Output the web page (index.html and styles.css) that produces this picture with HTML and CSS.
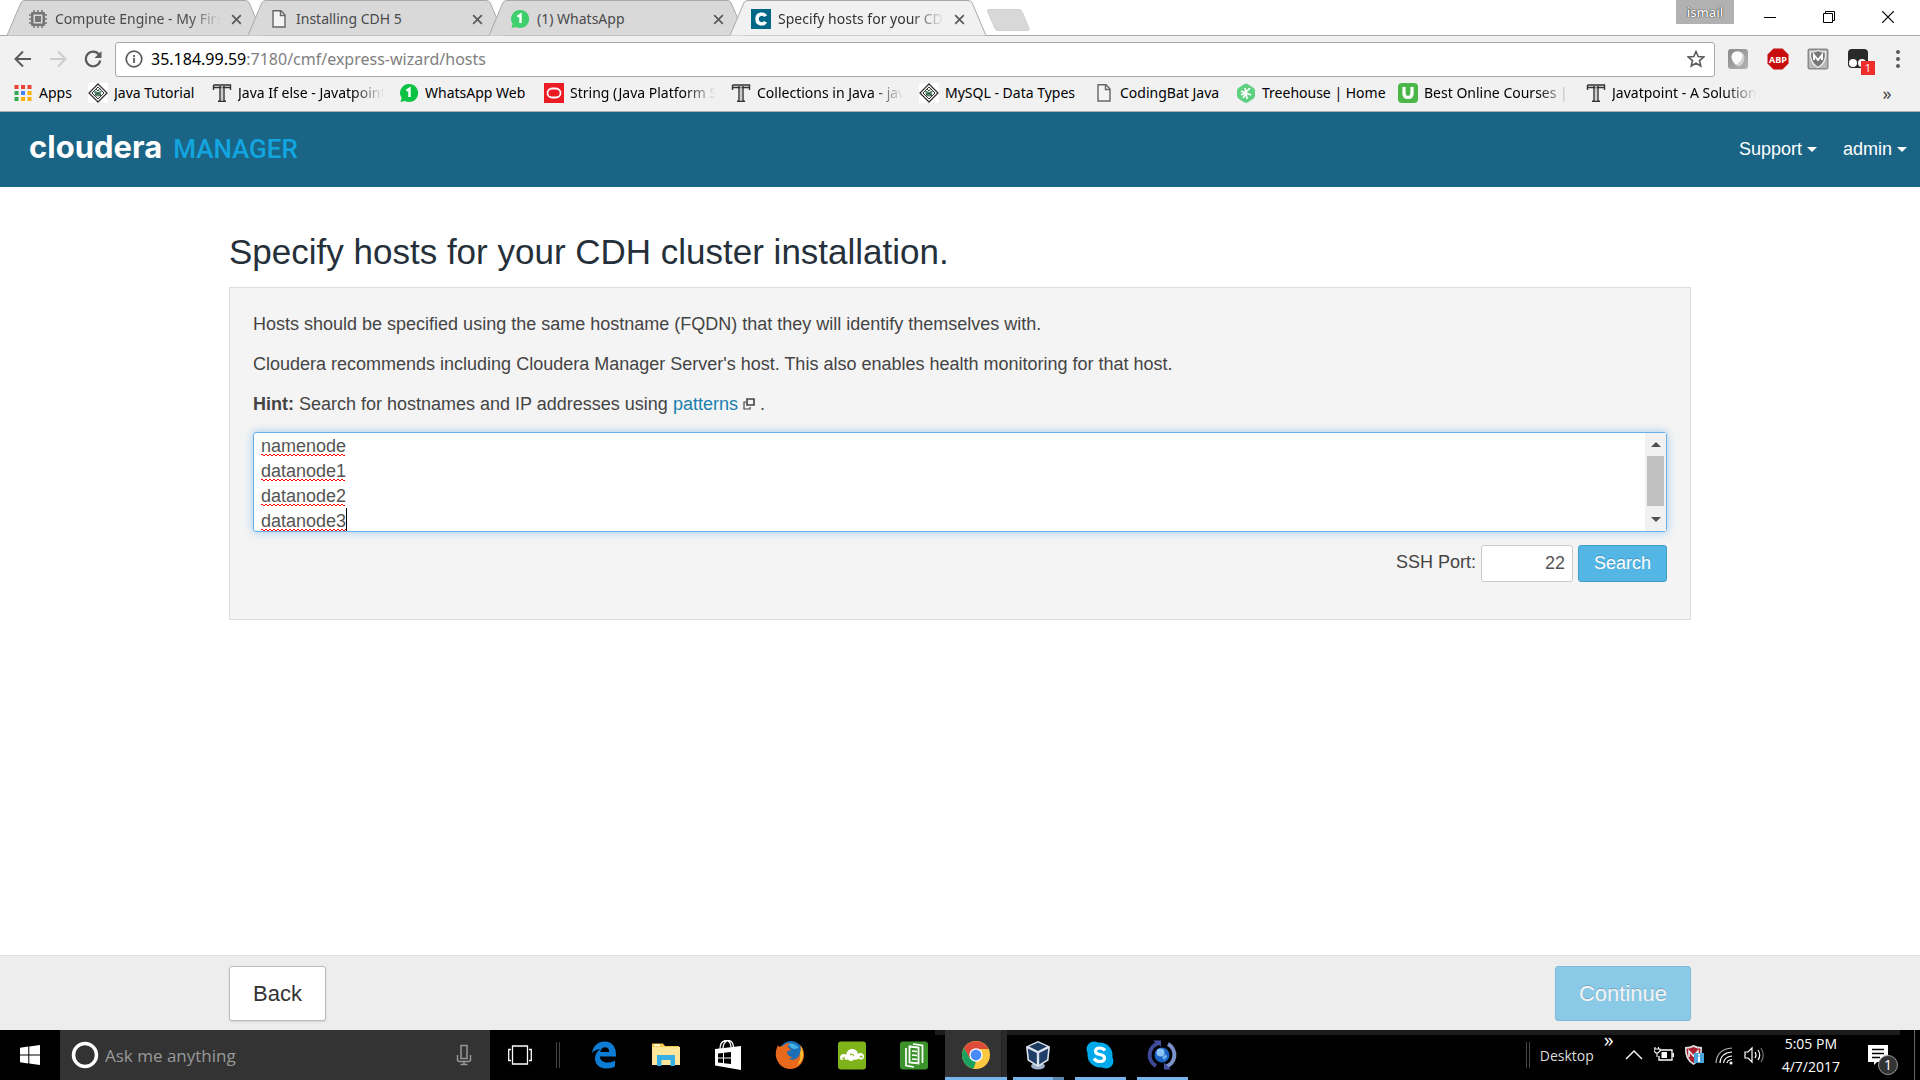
FILE: index.html
```html
<!DOCTYPE html>
<html lang="en">
<head>
<meta charset="utf-8">
<title>Specify hosts for your CDH cluster installation.</title>
<link rel="stylesheet" href="styles.css">
</head>
<body>
<svg class="sprite" aria-hidden="true">
  <symbol id="i-close" viewBox="0 0 12 12"><path d="M2 2l8 8M10 2l-8 8" fill="none" stroke="#5a5a5a" stroke-width="1.600"/></symbol>
  <symbol id="i-page" viewBox="0 0 20 20"><path d="M4 1.800h8l4 4.200v12H4z" fill="#f4f4f4" stroke="#666" stroke-width="1.400"/><path d="M11.500 2v4.500H16" fill="none" stroke="#666" stroke-width="1.400"/></symbol>
  <symbol id="i-whatsapp" viewBox="0 0 20 20"><path d="M10 1a9 9 0 1 1-4 17L1.500 19 2.600 15A9 9 0 0 1 10 1z" fill="currentColor"/><path d="M7.500 7.800l3-2V14" fill="none" stroke="#fff" stroke-width="2.400"/></symbol>
  <symbol id="i-tp" viewBox="0 0 20 20"><rect width="20" height="20" fill="#fff"/><path d="M10 1l9 9-9 9-9-9z" fill="#fff" stroke="#333" stroke-width="1.300"/><path d="M10 4l6 6-6 6-6-6z" fill="none" stroke="#333"/><path d="M6 8c2-1 3 1 4 1s2-2 4-1c-1 1-1 2-1 4-1 2-5 2-6 0-.500-2-.500-3-1-4z" fill="#5c8a70"/><path d="M8 6l2 2 2-3M7 12l3-2 3 3" fill="none" stroke="#2f4a3c"/></symbol>
  <symbol id="i-t" viewBox="0 0 20 20"><path d="M1.500 2h17v5M1.500 7V2M2 4.500h16M8 3v15M12 3v15M6 18.200h8" fill="none" stroke="#333" stroke-width="1.400"/><path d="M9.300 4h1.400v14H9.300z" fill="#bbb"/></symbol>
  <symbol id="i-oracle" viewBox="0 0 20 20"><rect width="20" height="20" fill="#ed1c24"/><rect x="3.500" y="5.500" width="13" height="9" rx="4.500" fill="none" stroke="#fff" stroke-width="1.800"/></symbol>
</svg>

<header class="browser">
  <div class="tabstrip">
    <nav class="tabs" aria-label="Tabs">
      <div class="tab">
        <svg class="tab-shape" viewBox="0 0 256 36"><path d="M0 35.500L14 2.500Q15.500.500 18 .500H238Q240.500.500 242 2.500L256 35.500"/></svg>
        <svg class="ico" viewBox="0 0 20 20"><path d="M6 1v18M10 1v18M14 1v18M1 6h18M1 10h18M1 14h18" stroke="#757575" stroke-width="1.500"/><rect x="3" y="3" width="14" height="14" rx="1" fill="#757575"/><rect x="5.500" y="5.500" width="9" height="9" fill="#d8d8d8"/><rect x="7" y="7" width="6" height="6" fill="#757575"/></svg>
        <span class="tab-title fade">Compute Engine - My First</span>
        <button class="tab-close" aria-label="Close tab"><svg><use href="#i-close"/></svg></button>
      </div>
      <div class="tab">
        <svg class="tab-shape" viewBox="0 0 256 36"><path d="M0 35.500L14 2.500Q15.500.500 18 .500H238Q240.500.500 242 2.500L256 35.500"/></svg>
        <svg class="ico"><use href="#i-page"/></svg>
        <span class="tab-title">Installing CDH 5</span>
        <button class="tab-close" aria-label="Close tab"><svg><use href="#i-close"/></svg></button>
      </div>
      <div class="tab">
        <svg class="tab-shape" viewBox="0 0 256 36"><path d="M0 35.500L14 2.500Q15.500.500 18 .500H238Q240.500.500 242 2.500L256 35.500"/></svg>
        <svg class="ico wa-light"><use href="#i-whatsapp"/></svg>
        <span class="tab-title">(1) WhatsApp</span>
        <button class="tab-close" aria-label="Close tab"><svg><use href="#i-close"/></svg></button>
      </div>
      <div class="tab active">
        <svg class="tab-shape" viewBox="0 0 256 36"><path d="M0 35.500L14 2.500Q15.500.500 18 .500H238Q240.500.500 242 2.500L256 35.500"/></svg>
        <svg class="ico" viewBox="0 0 20 20"><rect width="20" height="20" fill="#006786"/><path d="M14.500 7.300C13 4.200 6 4 6 10s7 5.800 8.500 2.700" fill="none" stroke="#fff" stroke-width="3.400"/></svg>
        <span class="tab-title fade">Specify hosts for your CDH</span>
        <button class="tab-close" aria-label="Close tab"><svg><use href="#i-close"/></svg></button>
      </div>
    </nav>
    <button class="new-tab" aria-label="New tab"><svg viewBox="0 0 44 22"><path d="M3 .500h30q2 0 3 2l7 17q.500 2-1.500 2H12q-2 0-3-2L1.500 2.500Q1 .500 3 .500z" fill="#d8d8d8" stroke="#cfcfcf"/></svg></button>
    <div class="window-controls">
      <button class="profile">ismail</button>
      <button aria-label="Minimize"><svg viewBox="0 0 12 12"><path d="M0 6.500h12" stroke="#000"/></svg></button>
      <button aria-label="Restore"><svg viewBox="0 0 12 12"><path d="M.500 2.500h9v9h-9zM2.500 2.500v-2h9v9h-2" fill="none" stroke="#000"/></svg></button>
      <button aria-label="Close"><svg viewBox="0 0 12 12"><path d="M0 0l12 12M12 0L0 12" stroke="#000" stroke-width="1.200"/></svg></button>
    </div>
  </div>

  <div class="toolbar">
    <button class="nav-btn" aria-label="Back"><svg viewBox="0 0 18 18"><path d="M17 9H2M9 1.500L1.500 9 9 16.500" fill="none" stroke="#5a5a5a" stroke-width="2"/></svg></button>
    <button class="nav-btn" aria-label="Forward"><svg viewBox="0 0 18 18"><path d="M1 9h15M9 1.500L16.500 9 9 16.500" fill="none" stroke="#ccc" stroke-width="2"/></svg></button>
    <button class="nav-btn" aria-label="Reload"><svg viewBox="0 0 18 18"><path d="M15 4.500A7.300 7.300 0 1 0 16.300 10.500" fill="none" stroke="#5a5a5a" stroke-width="2.200"/><path d="M17.500 1v7h-7z" fill="#5a5a5a"/></svg></button>
    <div class="omnibox">
      <svg viewBox="0 0 18 18"><circle cx="9" cy="9" r="7.800" fill="none" stroke="#5a5a5a" stroke-width="1.700"/><path d="M9 8v5M9 5v2" stroke="#5a5a5a" stroke-width="1.800"/></svg>
      <div class="url" role="textbox" aria-label="Address"><b>35.184.99.59</b>:7180/cmf/express-wizard/hosts</div>
      <svg viewBox="0 0 18 18"><path d="M9 1.500l2.200 5 5.500.500-4.200 3.600 1.300 5.400L9 13.100 4.200 16l1.300-5.400L1.300 7l5.500-.500z" fill="none" stroke="#5a5a5a" stroke-width="1.600"/></svg>
    </div>
    <div class="extensions">
      <svg viewBox="0 0 22 22"><defs><linearGradient id="g1" x2="1" y2="1"><stop stop-color="#888"/><stop offset="1" stop-color="#b5b5b5"/></linearGradient></defs><rect x="1" y="1" width="20" height="20" rx="3" fill="url(#g1)"/><path d="M11 3.500q6 0 6.500 6Q17 17 11 18.500 5 15 4.500 9 5 3.500 11 3.500z" fill="#d2d2d2"/><path d="M10 3.500q5 0 5.500 4-.500 6-6.500 9Q4.500 13 4.500 8 5.500 3.500 10 3.500z" fill="#fafafa"/></svg>
      <svg viewBox="0 0 22 22"><path d="M6.500.500h9l6 6v9l-6 6h-9l-6-6v-9z" fill="#c70d0e"/><text x="11" y="15" class="abp">ABP</text></svg>
      <svg viewBox="0 0 22 22"><rect x=".500" y=".500" width="21" height="21" rx="2" fill="#8b8b8b"/><rect x="2" y="2" width="18" height="18" fill="#b8b8b8"/><path d="M11 2.500q4 2 7.500 1.500 1 11-7.500 15.500Q2.500 15 3.500 4 7 4.500 11 2.500z" fill="#777" stroke="#eee" stroke-width="1.300"/><path d="M7 12V7l4 5 4-5v5" fill="none" stroke="#fff" stroke-width="2"/></svg>
      <div class="monkey">
        <svg viewBox="0 0 22 22"><rect x="1" y="1" width="20" height="19" rx="4" fill="#2a2a2a"/><circle cx="6" cy="15" r="4" fill="#fff"/><circle cx="15" cy="15" r="4" fill="#fff"/></svg>
        <span class="badge">1</span>
      </div>
      <svg viewBox="0 0 22 22"><g fill="#5a5a5a"><circle cx="11" cy="4" r="2"/><circle cx="11" cy="11" r="2"/><circle cx="11" cy="18" r="2"/></g></svg>
    </div>
  </div>

  <nav class="bookmarks" aria-label="Bookmarks">
    <a href="#"><svg viewBox="0 0 20 20"><g fill="#ea4335"><path d="M1.500 2h4v4h-4zM8 2h4v4H8zM14.500 2h4v4h-4z"/></g><path d="M1.500 8h4v4h-4zM1.500 14h4v4h-4z" fill="#34a853"/><path d="M8 8h4v4H8z" fill="#4285f4"/><path d="M14.500 8h4v4h-4zM8 14h4v4H8zM14.500 14h4v4h-4z" fill="#fbaf05"/></svg><span>Apps</span></a>
    <a href="#"><svg><use href="#i-tp"/></svg><span>Java Tutorial</span></a>
    <a href="#"><svg><use href="#i-t"/></svg><span class="fade">Java If else - Javatpoint</span></a>
    <a href="#"><svg class="wa"><use href="#i-whatsapp"/></svg><span>WhatsApp Web</span></a>
    <a href="#"><svg><use href="#i-oracle"/></svg><span class="fade">String (Java Platform S</span></a>
    <a href="#"><svg><use href="#i-t"/></svg><span class="fade">Collections in Java - jav</span></a>
    <a href="#"><svg><use href="#i-tp"/></svg><span>MySQL - Data Types</span></a>
    <a href="#"><svg><use href="#i-page"/></svg><span>CodingBat Java</span></a>
    <a href="#"><svg viewBox="0 0 20 20"><path d="M10 .500Q11 .500 17 4.500q2 1 2 3v5q0 2-2 3.500-6 4-7 4t-7-4q-2-1.500-2-3.500v-5q0-2 2-3Q9 .500 10 .500z" fill="#5fcf80"/><path d="M5 12l5-3 4-4M5 8l5 2 5 2M9 5l1 5 1 6M10 10l-3 5" fill="none" stroke="#fff" stroke-width="1.700"/></svg><span>Treehouse | Home</span></a>
    <a href="#"><svg viewBox="0 0 20 20"><rect width="20" height="20" rx="4" fill="#4bb749"/><path d="M6 4v6.500q0 4 4 4t4-4V4" fill="none" stroke="#fff" stroke-width="3.200"/></svg><span class="fade">Best Online Courses | U</span></a>
    <a href="#"><svg><use href="#i-t"/></svg><span class="fade">Javatpoint - A Solution</span></a>
    <button class="more" aria-label="More bookmarks">»</button>
  </nav>
</header>

<header class="app-bar">
  <a class="logo" href="#"><strong>cloudera</strong><span>MANAGER</span></a>
  <nav class="app-nav">
    <a href="#">Support<i class="caret"></i></a>
    <a href="#">admin<i class="caret"></i></a>
  </nav>
</header>

<main class="page">
  <div class="container">
    <h1>Specify hosts for your CDH cluster installation.</h1>
    <section class="panel">
      <p>Hosts should be specified using the same hostname (FQDN) that they will identify themselves with.</p>
      <p>Cloudera recommends including Cloudera Manager Server's host. This also enables health monitoring for that host.</p>
      <p><strong>Hint:</strong> Search for hostnames and IP addresses using <a href="#">patterns</a> <svg class="ext" viewBox="0 0 12 12"><path d="M4 1h7v6H4z" fill="none" stroke="#444" stroke-width="1.600"/><path d="M3 4H1v7h6V9" fill="none" stroke="#444" stroke-width="1.200"/></svg> .</p>
      <div class="hosts">
        <textarea aria-label="Hosts" spellcheck="false">namenode
datanode1
datanode2
datanode3</textarea>
        <div class="scrollbar" aria-hidden="true"><i class="up"></i><i class="thumb"></i><i class="down"></i></div>
        <div class="marks" aria-hidden="true"><i></i><i></i><i></i><i class="cursor"></i></div>
      </div>
      <form class="search-row">
        <label for="port">SSH Port:</label>
        <input id="port" type="text" value="22">
        <button type="button" class="btn primary">Search</button>
      </form>
    </section>
  </div>
</main>

<footer class="wizard-bar">
  <div class="container">
    <button class="btn large">Back</button>
    <button class="btn large primary" disabled>Continue</button>
  </div>
</footer>

<div class="taskbar">
  <button class="start" aria-label="Start"><svg viewBox="0 0 20 20"><path d="M0 2.800l8.300-1.200v7.900H0zM9.300 1.500L20 0v9.500H9.300zM0 10.500h8.300v7.900L0 17.200zM9.300 10.500H20V20L9.300 18.500z" fill="#fff"/></svg></button>
  <div class="cortana">
    <svg class="ring" viewBox="0 0 28 28"><circle cx="14" cy="14" r="11.500" fill="none" stroke="#fff" stroke-width="3.500"/></svg>
    <input type="text" aria-label="Search" placeholder="Ask me anything">
    <svg class="mic" viewBox="0 0 16 22"><path d="M5 1.500h6v13H5zM1.500 11v4.500q0 2 2 2h9q2 0 2-2V11M8 17.500v3M4.500 20.500h7" fill="none" stroke="#999" stroke-width="1.500"/></svg>
  </div>
  <button class="task-view" aria-label="Task view"><svg viewBox="0 0 24 20"><path d="M4.500 1h15v18h-15zM3 4.500H.700v11H3M21 4.500h2.300v11H21" fill="none" stroke="#fff" stroke-width="1.300"/></svg></button>
  <i class="grip"></i>
  <div class="apps">
    <button aria-label="Edge"><svg viewBox="0 0 30 30"><path d="M3 13C4 6 9 1.500 15.500 1.500c8 0 12 6 11.500 15H11c0 4 3.500 6 8 6 2.500 0 5-.700 7-2v6c-2 1.300-5 2-8.500 2C10 28.500 6 24 6 18.500c0-4 2-7.500 5.500-9.500C7.500 9.500 4.500 11 3 13zm8.300-1h9c0-3-1.600-4.700-4.300-4.700-2.500 0-4.300 1.700-4.700 4.700z" fill="#0c7cd5"/></svg></button>
    <button aria-label="File Explorer"><svg viewBox="0 0 30 30"><path d="M1 3.500h11l2 2.500h14v19H1z" fill="#f5c84c"/><path d="M1 7h28v18H1z" fill="#fde69a"/><path d="M3 4.500h6v1.500H3z" fill="#fff"/><path d="M6 26V15h18v11h-4.500v-6h-9v6z" fill="#36b0e4"/></svg></button>
    <button aria-label="Store"><svg viewBox="0 0 30 30"><path d="M2 9l26-3v24L2 25.500z" fill="#fff"/><path d="M7 9q0-8 6-8.500Q17.500.500 18 7M10 9q0-7 5-8.500Q20 .500 20.500 7" fill="none" stroke="#fff" stroke-width="1.300"/><path d="M5 13.500l5-.600v4.600H5zM11 12.800l7-.800v5.500h-7zM5 18.500h5v4.600L5 22.500zM11 18.500h7V24l-7-.800z" fill="#000"/></svg></button>
    <button aria-label="Firefox"><svg viewBox="0 0 30 30"><circle cx="16" cy="13" r="12" fill="#1b6fb5"/><path d="M13 4q6-2 11 4l-4 1q-4 0-7-5z" fill="#45b3e8"/><path d="M3 5q-3 6-2 12c2 8 8 12 14 12 8 0 14-6 14-14 0-4-1-7-4-10 1 4 1 6 0 8-1 6-7 8-11 6l4-2c-3 0-6-2-6-5 1-2 3-1 4-2l-3-3c0-2 1-3 2-4-3 0-5 1-7 3-1 0-3 0-4 1z" fill="#e8691b"/><path d="M26 6c4 8 2 16-4 19 3-4 4-8 3-12 1-2 1-4 1-7z" fill="#fbc02d"/></svg></button>
    <button aria-label="Cloud"><svg viewBox="0 0 30 30"><rect x="1" y="1.500" width="28" height="28" rx="3" fill="#7fb31a"/><path d="M3 18q0-4 4-4 2 0 2 1 1-6 6-6t6 5q1-1 2-1 4 0 4 3.500 0 3-3 3-2 0-2-1-3 2-5 1-3 3-6 0-3 1-4-1-1 1.500-2 1.500-2 0-2-2z" fill="#fff"/><path d="M5 18q2 1 3-1M23 17q2-2 2 1M13 15q2-2 4 1" fill="none" stroke="#7fb31a" stroke-width="1.200"/></svg></button>
    <button aria-label="Documents"><svg viewBox="0 0 30 30"><rect x="1" y="1.500" width="28" height="28" rx="3" fill="#3c932c"/><path d="M10.500 6.500l9 1v16l-9-1z" fill="none" stroke="#fff" stroke-width="1.800"/><path d="M7 8v17.500l8 1.500M14 4l9.500 1.500V23M13 11l5 .500M13 15l5 .500M13 19l5 .500" fill="none" stroke="#fff" stroke-width="1.700"/></svg></button>
    <button class="running current" aria-label="Chrome"><svg viewBox="0 0 30 30"><circle cx="15" cy="15" r="14" fill="#fbc840"/><path d="M15 15L8.500 19 2.900 8A14 14 0 0 1 27.500 9H15z" fill="#de4b3b"/><path d="M2.900 8l6 10.500L15 21.500 12.500 28.800A14 14 0 0 1 2.900 8z" fill="#1ba160"/><path d="M20.500 18.500L14.500 29h-2L16 21z" fill="#fbc840"/><circle cx="15" cy="15" r="6.700" fill="#fff"/><circle cx="15" cy="15" r="5.400" fill="#4a8af4"/></svg></button>
    <button class="running multi" aria-label="VirtualBox"><svg viewBox="0 0 30 30"><ellipse cx="15" cy="26" rx="7" ry="3.500" fill="#9fb3cc"/><path d="M15 1l12 5.500-1.500 14L15 27 4.500 20.500 3 6.500z" fill="#dbe4ee"/><path d="M15 2.500l9 4L15 11 6 6.500z" fill="#1c3a60"/><path d="M4.800 8.500l9 4.500v11.500l-7.800-5zM25.200 8.500l-9 4.500v11.500l7.800-5z" fill="#1f3f68"/></svg></button>
    <button class="running" aria-label="Skype"><svg viewBox="0 0 30 30"><circle cx="15" cy="15" r="12.500" fill="#00a9ec"/><circle cx="9" cy="9" r="7.500" fill="#00a9ec"/><circle cx="21" cy="21" r="7.500" fill="#00a9ec"/><path d="M20 10.500q-2-2.500-5.500-2.500-4 0-4 3.200 0 2.500 4.500 3.300t4.500 3.500q0 3.500-4.500 3.500-4 0-6-3" fill="none" stroke="#fff" stroke-width="3.200"/></svg></button>
    <button class="running" aria-label="Sync"><svg viewBox="0 0 30 30"><path d="M12 3A12.500 12.500 0 0 0 9 26" fill="none" stroke="#3f4a96" stroke-width="4"/><path d="M18 27A12.500 12.500 0 0 0 21 4" fill="none" stroke="#7a92c8" stroke-width="4"/><path d="M6 .500h8v6zM24 29.500h-7v-7z" fill="#4551a5"/><circle cx="15" cy="15" r="7.500" fill="#1d63c4"/><circle cx="13.500" cy="12.500" r="4" fill="#8cc4f5"/><path d="M15 17l4-3 1 3-3 3z" fill="#6db1ee"/></svg></button>
  </div>
  <div class="tray">
    <i class="grip"></i>
    <span class="desktop">Desktop</span><span class="chev">»</span>
    <svg viewBox="0 0 20 20"><path d="M2 14l8-8 8 8" fill="none" stroke="#fff" stroke-width="1.400"/></svg>
    <svg viewBox="0 0 20 20"><path d="M6 5h12v10H5v-4" fill="none" stroke="#fff" stroke-width="1.300"/><path d="M7.500 7h5.500v6H7.500zM18.500 8H20v4h-1.500z" fill="#fff"/><path d="M1 2v2M4.500 2v2M0 4h6v2L4 8H2L0 6zM3 8v4" fill="none" stroke="#fff" stroke-width="1.100"/></svg>
    <svg viewBox="0 0 20 20"><path d="M9.500 0q4 2 8.500 2 1 13-8.500 18Q0 15 1 2q5 0 8.500-2z" fill="#ddd"/><path d="M9.500 2q3 1.500 7 1.800 0 10-7 14.200Q2.500 14 2.500 3.800 6 3.500 9.500 2z" fill="#a8202f"/><path d="M5 12V6l4.500 5L14 6v5" fill="none" stroke="#eee" stroke-width="1.600"/><rect x="10" y="8" width="10" height="10" fill="#49a5dc"/><path d="M15 11.500V17M15 9v1.500" stroke="#fff" stroke-width="2"/></svg>
    <svg viewBox="0 0 20 20"><g fill="none" stroke="#fff" stroke-width="1.200"><path d="M2 18Q3 4 18 3" opacity=".7"/><path d="M6 18Q6.500 8 18 7"/><path d="M9.500 18Q10 12 18 11"/><path d="M13 18q.500-3 5-3.500"/></g><circle cx="17" cy="18" r="1.500" fill="#fff"/></svg>
    <svg viewBox="0 0 20 20"><path d="M1 7h3l4-4v14l-4-4H1z" fill="none" stroke="#fff" stroke-width="1.200"/><path d="M11 7q2 3 0 6M14 5q3.500 5 0 10" fill="none" stroke="#fff" stroke-width="1.200"/><path d="M17 3q4.500 7 0 14" fill="none" stroke="#777" stroke-width="1.200"/></svg>
    <time class="clock"><span>5:05 PM</span><span>4/7/2017</span></time>
    <div class="notify">
      <svg viewBox="0 0 20 20"><path d="M0 0h20v17H9l-3 3v-3H0z" fill="#fff"/><path d="M4 4.500h12M4 8.500h12M4 12.500h8" stroke="#000" stroke-width="1.300"/></svg>
      <span>1</span>
    </div>
    <button class="peek" aria-label="Show desktop"></button>
  </div>
</div>
</body>
</html>
```
FILE: styles.css
```css
* { box-sizing: border-box; }

body {
  margin: 0;
  min-height: 100vh;
  display: flex;
  flex-direction: column;
  background: #fff;
  color: #444;
  font: 18px/25px "Liberation Sans", Arial, sans-serif;
}

button { margin: 0; padding: 0; border: 0; background: none; font: inherit; color: inherit; }
a { text-decoration: none; color: inherit; }
i { font-style: normal; }
svg { display: block; flex: none; }
.sprite { position: absolute; width: 0; height: 0; }
.fade { -webkit-mask-image: linear-gradient(90deg, #000 calc(100% - 32px), transparent); mask-image: linear-gradient(90deg, #000 calc(100% - 32px), transparent); }

/* Browser window */
.browser { background: #f1f1f1; border-bottom: 1px solid #b0b0b0; font: 14px/20px "Noto Sans", "Open Sans", sans-serif; color: #000; }
.tabstrip { display: flex; align-items: flex-start; height: 36px; padding-left: 7px; background: linear-gradient(#fff 35px, #a9a9a9 35px); }
.tabs { display: flex; }
.tab { position: relative; display: flex; align-items: center; width: 256px; height: 36px; margin-right: -15px; padding: 2px 19px 0 21px; color: #4a4a4a; }
.tab > * { position: relative; }
.tab .tab-shape { position: absolute; inset: 0; width: 256px; height: 36px; fill: #d9d9d9; stroke: #a9a9a9; }
.tab.active { z-index: 1; color: #333; }
.tab.active .tab-shape { fill: #f1f1f1; }
.tab .ico { width: 20px; height: 20px; margin-right: 7px; }
.wa-light { color: #3fcf6c; }
.wa { color: #0dc143; }
.tab-title { flex: 1; margin-right: 9px; overflow: hidden; white-space: nowrap; }
.tab-close { width: 13px; height: 13px; margin-right: 1px; }
.tab-close svg { width: 13px; height: 13px; }
.new-tab { margin: 9px 0 0 15px; }
.new-tab svg { width: 44px; height: 22px; }
.window-controls { display: flex; margin-left: auto; padding-right: 3px; }
.window-controls button { width: 59px; height: 34px; display: grid; place-items: center; }
.window-controls svg { width: 12px; height: 12px; }
.window-controls .profile { width: 58px; height: 24px; margin-right: 6px; background: #b1b1b1; color: #fff; font-size: 13px; font-weight: 500; text-shadow: 0 0 1px #222, 0 0 1px #222; }

.toolbar { display: flex; align-items: center; height: 46px; padding: 5px 11px 5px 5px; }
.nav-btn { width: 35px; height: 34px; display: grid; place-items: center; }
.nav-btn svg { width: 18px; height: 18px; }
.omnibox { flex: 1; display: flex; align-items: center; gap: 8px; height: 35px; margin-left: 5px; padding: 0 9px; border: 1px solid #a9a9a9; border-radius: 3px; background: #fff; }
.omnibox svg { width: 18px; height: 18px; }
.url { flex: 1; font-size: 16px; color: #808080; white-space: nowrap; }
.url b { font-weight: 400; color: #000; }
.extensions { display: flex; align-items: center; gap: 18px; margin-left: 12px; }
.extensions svg { width: 22px; height: 22px; }
.abp { font: 700 9px "Open Sans", sans-serif; fill: #fff; text-anchor: middle; }
.monkey { position: relative; }
.badge { position: absolute; left: 14px; top: 13px; width: 14px; height: 14px; background: #ee2d2d; color: #fff; font: 11px/14px "Open Sans", sans-serif; text-align: center; }

.bookmarks { display: grid; grid-template-columns: 75px 124px 187px 145px 187px 188px 175px 142px 162px 188px 1fr 30px; align-items: center; height: 29px; padding: 0 18px 7px 13px; }
.bookmarks a { display: flex; align-items: center; gap: 6px; white-space: nowrap; }
.bookmarks svg { width: 20px; height: 20px; }
.bookmarks span { max-width: 146px; overflow: hidden; }
.more { font-size: 18px; text-align: center; color: #444; }

/* Application header */
.app-bar { display: flex; align-items: center; justify-content: space-between; height: 75px; padding: 0 13px 1px 29px; background: #1a6485; color: #fff; }
.logo { display: flex; align-items: baseline; gap: 11px; margin-bottom: 3px; font: 500 26px/32px Roboto, sans-serif; white-space: nowrap; }
.logo strong { font: 700 31px/32px Inter, sans-serif; }
.logo span { color: #12a5df; }
.app-nav { display: flex; gap: 26px; }
.app-nav a { display: flex; align-items: center; gap: 5px; }
.caret { border: 5px solid transparent; border-top-color: #fff; border-bottom: 0; }

/* Wizard page */
.page { flex: 1; padding-top: 40px; }
.container { width: calc(100% - 48px); max-width: 1462px; margin: 0 auto; }
h1 { margin: 0 0 10px; font-size: 35px; line-height: 50px; font-weight: 400; color: #25303a; }
.panel { padding: 24px 23px 37px; border: 1px solid #ddd; background: #f4f4f4; }
.panel p { margin: 0 0 15px; }
.panel a { color: #1a7fae; }
.ext { display: inline-block; width: 12px; height: 12px; }
.hosts { position: relative; display: flex; height: 100px; border: 1px solid #66afe9; border-radius: 3px; background: #fff; box-shadow: 0 0 10px rgba(102, 175, 233, .6); }
.hosts textarea { flex: 1; margin: 0; padding: 1px 7px 0; border: 0; outline: 0; resize: none; overflow: hidden; background: none; font: inherit; line-height: 25px; color: #555; }
.scrollbar { display: flex; flex-direction: column; align-items: center; width: 21px; padding: 9px 0; background: #f1f1f1; }
.scrollbar .up { border: 5px solid transparent; border-bottom-color: #505050; border-top: 0; }
.scrollbar .down { margin-top: auto; border: 5px solid transparent; border-top-color: #505050; border-bottom: 0; }
.scrollbar .thumb { width: 17px; height: 50px; margin-top: 9px; background: #c1c1c1; }
.marks { position: absolute; left: 7px; top: 0; pointer-events: none; }
.marks i { display: block; width: 84px; height: 25px; background: repeating-linear-gradient(90deg, #f00 0 2px, transparent 2px 4px) 0 21px / 100% 1px no-repeat, repeating-linear-gradient(90deg, transparent 0 2px, #f00 2px 4px) 0 22px / 100% 1px no-repeat; }
.marks .cursor { width: 86px; height: 23px; border-right: 1px solid #000; }
.search-row { display: flex; justify-content: flex-end; gap: 5px; margin-top: 13px; }
.search-row label { padding-top: 5px; }
.search-row input { width: 92px; height: 37px; padding: 0 7px; border: 1px solid #ccc; border-radius: 3px; font: inherit; color: #555; text-align: right; }
.btn { height: 37px; padding: 0 15px; border: 1px solid #bbb; border-radius: 3px; background: #fff; color: #333; }
.btn.primary { border-color: #3f9fcb; background: #53b6e4; color: #fff; text-shadow: 0 -1px 0 rgba(0, 0, 0, .2); }
.btn.large { height: 55px; padding: 0 23px; font-size: 22px; box-shadow: 0 1px 2px rgba(0, 0, 0, .12); }
.btn.large:disabled { border-color: #7dbbd8; background: #8acae7; color: #f4f4f4; box-shadow: none; }
.wizard-bar { padding: 10px 0 9px; border-top: 1px solid #ddd; background: #ededed; }
.wizard-bar .container { display: flex; justify-content: space-between; }

/* Desktop taskbar */
.taskbar { display: flex; align-items: center; height: 50px; background: linear-gradient(#1c1c1c, #1c1c1c) right 20px top / 965px 5px no-repeat #000; color: #fff; font: 15px/23px "Open Sans", "Noto Sans", sans-serif; }
.start { width: 60px; height: 50px; display: grid; place-items: center; }
.start svg { width: 20px; height: 20px; }
.cortana { display: flex; align-items: center; width: 430px; height: 50px; padding: 0 18px 0 11px; background: #333; }
.ring { width: 28px; height: 28px; }
.cortana input { flex: 1; min-width: 0; padding: 0 0 0 6px; border: 0; outline: 0; background: none; font-family: inherit; font-size: 17px; }
.cortana input::placeholder { color: #999; }
.mic { width: 16px; height: 22px; }
.task-view { width: 60px; display: grid; place-items: center; }
.task-view svg { width: 24px; height: 20px; }
.grip { width: 4px; height: 26px; margin-left: 6px; border: 1px solid #444; border-width: 0 1px; }
.apps { display: flex; margin-left: 13px; }
.apps button { position: relative; width: 62px; height: 50px; display: grid; place-items: center; }
.apps svg { width: 30px; height: 30px; }
.apps .running::after { content: ""; position: absolute; left: 6px; right: 5px; bottom: 0; height: 3px; background: #76b4ec; }
.apps .current { background: linear-gradient(90deg, #333 56px, #222 56px, #2a2a2a 58px); }
.apps .current::after { left: 0; right: 0; }
.apps .multi::after { background: linear-gradient(90deg, #76b4ec 40px, #5a86b0 40px); }
.tray { display: flex; align-items: center; height: 50px; margin-left: auto; gap: 10px; }
.tray svg { width: 20px; height: 20px; }
.tray .grip { margin: 0; }
.desktop { color: #ddd; font-size: 14px; }
.chev { align-self: flex-start; font-size: 20px; line-height: 20px; }
.clock { display: flex; flex-direction: column; align-items: center; margin: 0 12px 0 8px; font-size: 14px; }
.notify { position: relative; margin: 0 16px 0 6px; }
.notify span { position: absolute; left: 10px; top: 10px; width: 20px; height: 20px; border: 1px solid #999; border-radius: 50%; background: #333; font-size: 14px; line-height: 18px; text-align: center; }
.peek { width: 6px; height: 50px; border-left: 1px solid #666; }
```
